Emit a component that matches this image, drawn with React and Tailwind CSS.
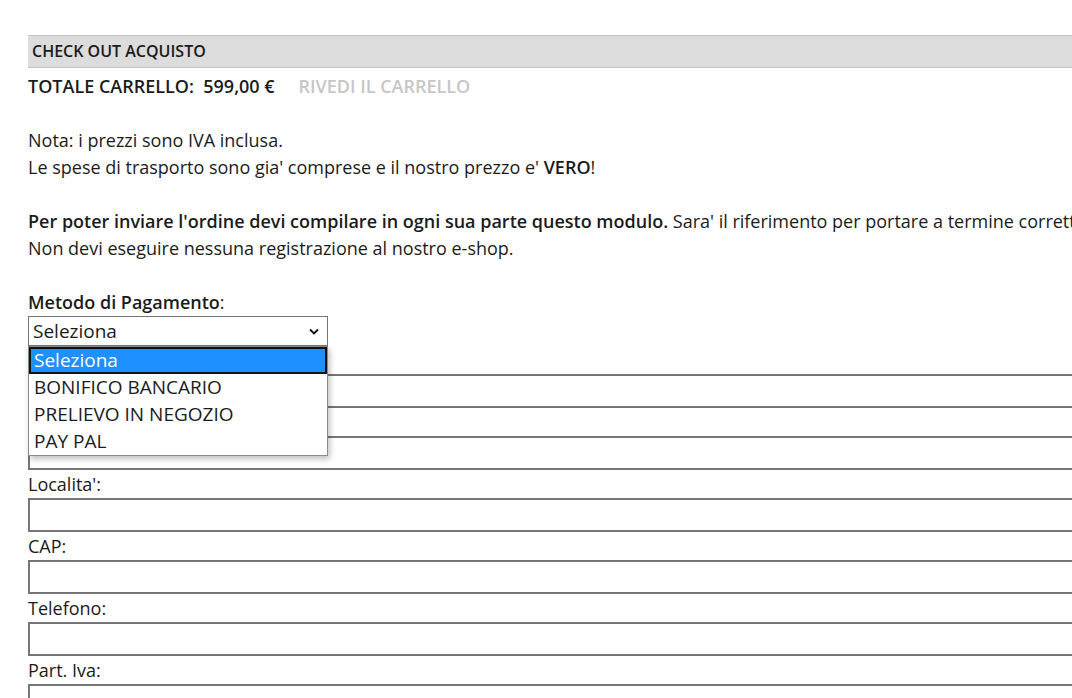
const fields = ['', '', "Localita':", 'CAP:', 'Telefono:', 'Part. Iva:'];

const options = ['Seleziona', 'BONIFICO BANCARIO', 'PRELIEVO IN NEGOZIO', 'PAY PAL'];

const Field = ({ label }) => (
  <div>
    <div className="h-[28px] leading-[28px]">{label || '\u00a0'}</div>
    <div className="h-[34px] border-2 border-[#767676] bg-white" />
  </div>
);

const App = () => {
  return (
    <div className="h-[698px] w-full overflow-hidden bg-white text-[18px] text-[#1b1b1b]" style={{ fontFamily: '"Open Sans", sans-serif' }}>
      <div className="w-[1500px] pl-[28px] pt-[35px] leading-[27px]">
        <div className="h-[33px] border-y border-[#c4c4c4] bg-[#dcdcdc] pl-[4px] text-[16px] font-semibold leading-[31px]">
          CHECK OUT ACQUISTO
        </div>

        <div className="mt-[5px] flex font-semibold">
          <span>TOTALE CARRELLO:&nbsp; 599,00 €</span>
          <span className="ml-[24px] text-[#c6c6c6]">RIVEDI IL CARRELLO</span>
        </div>

        <div className="h-[27px]" />
        <p>Nota: i prezzi sono IVA inclusa.</p>
        <p>
          Le spese di trasporto sono gia' comprese e il nostro prezzo e' <b className="font-semibold">VERO</b>!
        </p>

        <div className="h-[27px]" />
        <p className="whitespace-nowrap">
          <b className="font-semibold">Per poter inviare l'ordine devi compilare in ogni sua parte questo modulo.</b> Sara' il
          riferimento per portare a termine correttamente il tuo ordine.
        </p>
        <p>Non devi eseguire nessuna registrazione al nostro e-shop.</p>

        <div className="h-[27px]" />
        <p>
          <span className="font-semibold">Metodo di Pagamento</span>:
        </p>

        <div className="relative">
          <div className="flex h-[30px] w-[300px] items-center justify-between border border-[#767676] bg-white pl-[4px] pr-[8px] text-[19px]">
            <span>Seleziona</span>
            <svg width="10" height="7" viewBox="0 0 10 7" fill="none">
              <path d="M1 1.5l4 4 4-4" stroke="#111" strokeWidth="1.8" />
            </svg>
          </div>

          <div className="absolute left-0 top-[30px] z-10 w-[300px] border border-[#8a8a8a] bg-white text-[19px] shadow-[2px_3px_6px_rgba(0,0,0,0.25)]">
            {options.map((o, i) => (
              <div
                key={o}
                className={
                  i === 0
                    ? 'h-[27px] border-2 border-[#111] bg-[#1e90ff] pl-[3px] leading-[23px] text-white'
                    : 'h-[27px] pl-[5px] leading-[27px]'
                }
              >
                {o}
              </div>
            ))}
          </div>

          <div className="w-[1300px]">
            {fields.map((f, i) => (
              <Field key={i} label={f} />
            ))}
          </div>
        </div>
      </div>
    </div>
  );
};

export default App;
